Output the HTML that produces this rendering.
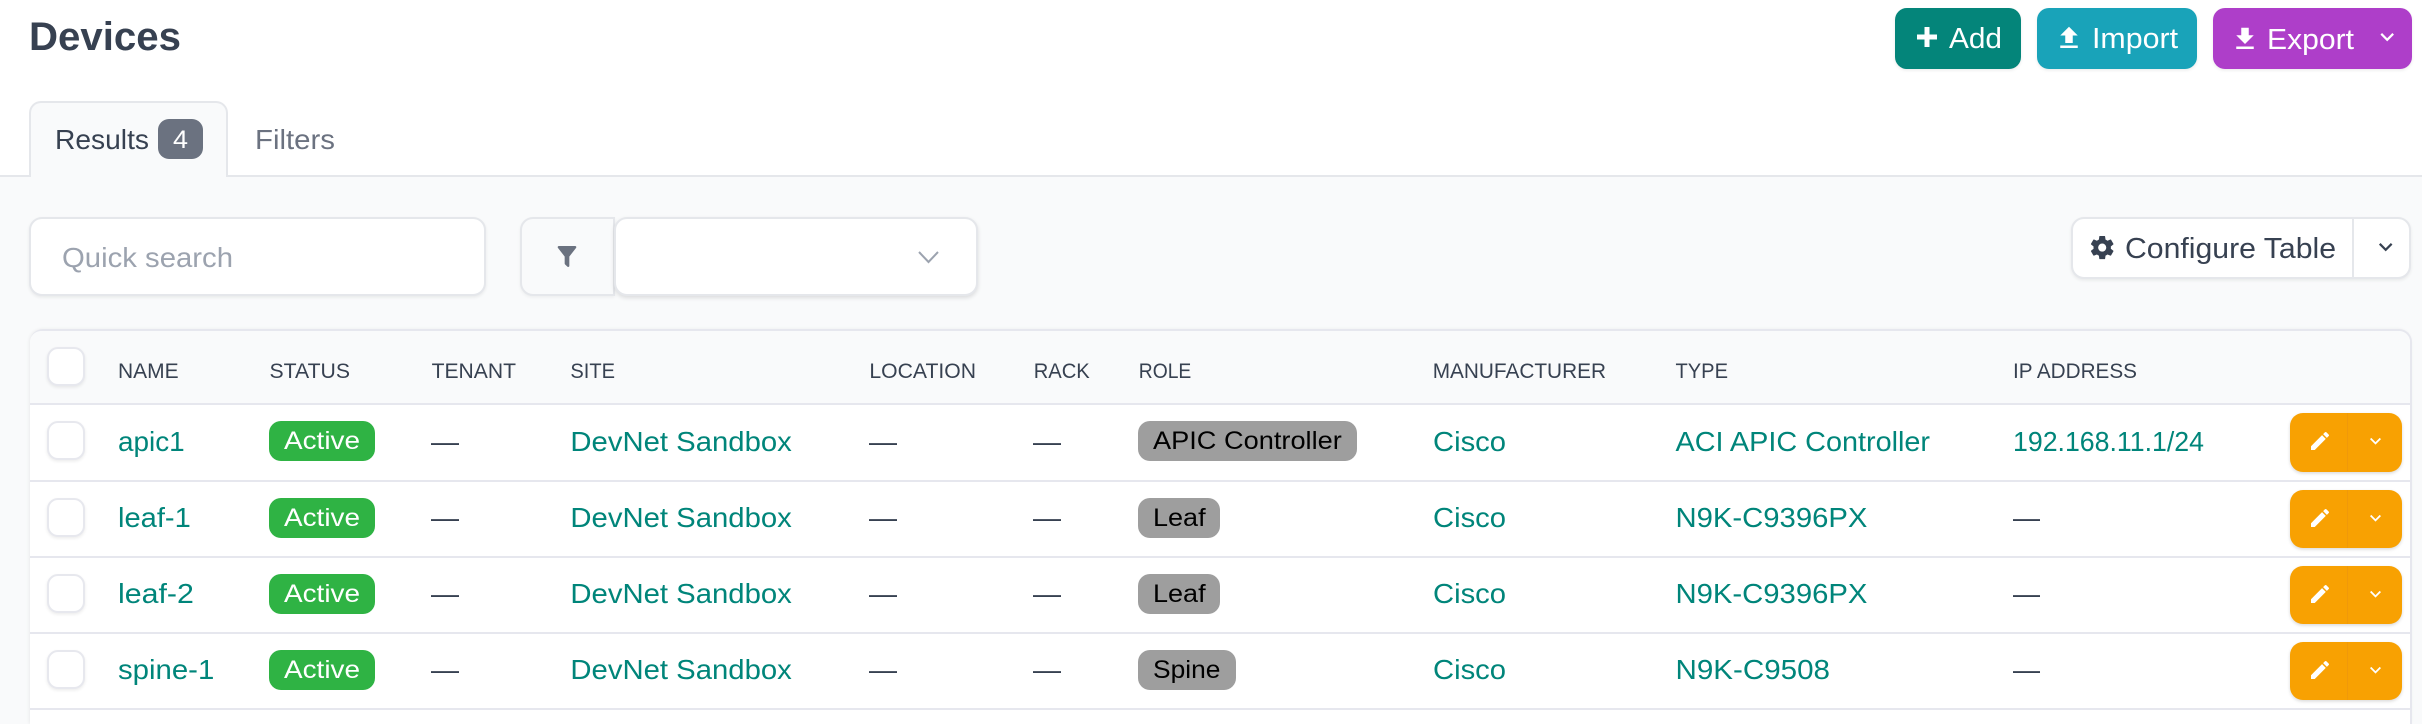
<!DOCTYPE html>
<html lang="en"><head><meta charset="utf-8"><title>Devices</title>
<style>
html,body{margin:0;padding:0;width:2422px;height:724px;overflow:hidden;background:#fff}
#p{position:relative;width:2422px;height:724px;overflow:hidden}
.b{position:absolute;box-sizing:border-box}
svg.o{position:absolute;left:0;top:0;font-family:"Liberation Sans",sans-serif}
.in{border:2px solid #e5e7eb;background:#fff;box-shadow:0 1.5px 3px rgba(0,0,0,.07)}
.cb{left:47px;width:38px;height:39px;border:2px solid #e7e8ee;border-radius:11px;background:#fff;box-shadow:0 1.5px 3px rgba(0,0,0,.08)}
.ln{left:30px;width:2380px;height:2px;background:#e6e7ee}
.act{left:269px;width:106px;height:40px;border-radius:12px;background:#2fb344}
.role{left:1138px;height:40px;border-radius:12px;background:#9e9e9e}
.ed{left:2290px;width:112px;height:58px;border-radius:13px;background:#f8a102;box-shadow:0 1.5px 3px rgba(0,0,0,.15)}
.dv{left:2347px;width:1px;height:58px;background:#f0990a}
.btn{top:8px;height:61px;border-radius:12px;box-shadow:0 1.5px 3px rgba(0,0,0,.08)}
text{font-size:28px}
.l{fill:#00857a}.d{fill:#374151}.h{fill:#374151;font-size:21px}.w{fill:#fff}.bd{font-size:25px}
.k{fill:#000}.i{fill:#fff}
</style></head><body><div id="p">
<div class="b" style="left:0;top:177px;width:2422px;height:547px;background:#f9fafb"></div>
<div class="b" style="left:0;top:175px;width:2422px;height:2px;background:#e5e7eb"></div>
<div class="b" style="left:29px;top:101px;width:199px;height:76px;background:#f9fafb;border:2px solid #e5e7eb;border-bottom:0;border-radius:12px 12px 0 0"></div>
<div class="b" style="left:158px;top:119px;width:45px;height:40px;border-radius:11px;background:#6b7280"></div>
<div class="b btn" style="left:1895px;width:126px;background:#04857a"></div>
<div class="b btn" style="left:2037px;width:160px;background:#19a3b9"></div>
<div class="b btn" style="left:2213px;width:199px;background:#ae3ec9"></div>
<div class="b in" style="left:29px;top:217px;width:457px;height:79px;border-radius:13px"></div>
<div class="b" style="left:520px;top:217px;width:95px;height:79px;background:#f9fafb;border:2px solid #e5e7eb;border-radius:13px 0 0 13px;box-shadow:0 1.5px 3px rgba(0,0,0,.05)"></div>
<div class="b in" style="left:614px;top:217px;width:364px;height:79px;border-radius:13px;box-shadow:0 2px 4px rgba(0,0,0,.12)"></div>
<div class="b in" style="left:2071px;top:217px;width:340px;height:62px;border-radius:13px"></div>
<div class="b" style="left:2352px;top:219px;width:2px;height:60px;background:#e5e7eb"></div>
<div class="b" style="left:30px;top:329px;width:2382px;height:395px;background:#fff;border-top:2px solid #e6e7ee;border-right:2px solid #e6e7ee;border-radius:13px 13px 0 0;box-shadow:-1px 0 3px rgba(0,0,0,.06)"></div>
<div class="b" style="left:30px;top:331px;width:2380px;height:72px;background:#f9fafb;border-radius:11px 11px 0 0"></div>
<div class="b ln" style="top:403px"></div><div class="b ln" style="top:480px"></div><div class="b ln" style="top:556px"></div><div class="b ln" style="top:632px"></div><div class="b ln" style="top:708px"></div>
<div class="b cb" style="top:347px"></div><div class="b cb" style="top:421px"></div><div class="b cb" style="top:498px"></div><div class="b cb" style="top:574px"></div><div class="b cb" style="top:650px"></div>
<div class="b act" style="top:421px"></div><div class="b act" style="top:498px"></div><div class="b act" style="top:574px"></div><div class="b act" style="top:650px"></div>
<div class="b role" style="top:421px;width:219px"></div><div class="b role" style="top:498px;width:82px"></div><div class="b role" style="top:574px;width:82px"></div><div class="b role" style="top:650px;width:98px"></div>
<div class="b ed" style="top:413px;height:59px"></div><div class="b ed" style="top:490px"></div><div class="b ed" style="top:566px"></div><div class="b ed" style="top:642px"></div>
<div class="b dv" style="top:413px"></div><div class="b dv" style="top:490px"></div><div class="b dv" style="top:566px"></div><div class="b dv" style="top:642px"></div>
<svg class="o" width="2422" height="724" viewBox="0 0 2422 724" xmlns="http://www.w3.org/2000/svg">
<defs>
<symbol id="chev" viewBox="0 0 24 24"><path d="M7.41,8.58L12,13.17L16.59,8.58L18,10L12,16L6,10L7.41,8.58Z"/></symbol>
<symbol id="pen" viewBox="0 0 24 24"><path d="M20.71,7.04C21.1,6.65 21.1,6 20.71,5.63L18.37,3.29C18,2.9 17.35,2.9 16.96,3.29L15.12,5.12L18.87,8.87M3,17.25V21H6.75L17.81,9.93L14.06,6.18L3,17.25Z"/></symbol>
</defs>
<text x="29" y="50" textLength="152" lengthAdjust="spacingAndGlyphs" style="font-size:40px;font-weight:700;fill:#374151">Devices</text>
<text x="55" y="149" textLength="94" lengthAdjust="spacingAndGlyphs" class="d">Results</text>
<text x="173" y="148" textLength="15" lengthAdjust="spacingAndGlyphs" class="w" style="font-size:25px">4</text>
<text x="255" y="149" textLength="80" lengthAdjust="spacingAndGlyphs" style="fill:#6b7280">Filters</text>
<svg x="1912" y="22" width="30" height="30" viewBox="0 0 24 24" fill="#fff"><path d="M20 14H14V20H10V14H4V10H10V4H14V10H20V14Z"/></svg>
<text x="1949" y="48" textLength="53" lengthAdjust="spacingAndGlyphs" class="w" style="font-size:29px">Add</text>
<svg x="2054" y="23" width="30" height="30" viewBox="0 0 24 24" fill="#fff"><path d="M9,16V10H5L12,3L19,10H15V16H9M5,20V18H19V20H5Z"/></svg>
<text x="2092" y="48" textLength="86" lengthAdjust="spacingAndGlyphs" class="w" style="font-size:29px">Import</text>
<svg x="2230" y="24" width="30" height="30" viewBox="0 0 24 24" fill="#fff"><path d="M5,20H19V18H5M19,9H15V3H9V9H5L12,16L19,9Z"/></svg>
<text x="2267" y="49" textLength="87" lengthAdjust="spacingAndGlyphs" class="w" style="font-size:29px">Export</text>
<use href="#chev" x="2373.7" y="23.4" width="27" height="27" fill="#fff"/>
<text x="62" y="267" textLength="171" lengthAdjust="spacingAndGlyphs" style="fill:#9ca3af">Quick search</text>
<svg x="553" y="242.5" width="28" height="28" viewBox="0 0 24 24" fill="#6b7280"><path d="M14,12V19.88C14.04,20.18 13.94,20.5 13.71,20.71C13.32,21.1 12.69,21.1 12.3,20.71L10.29,18.7C10.06,18.47 9.96,18.16 10,17.87V12H9.97L4.21,4.62C3.87,4.19 3.95,3.56 4.38,3.22C4.57,3.08 4.78,3 5,3V3H19V3C19.22,3 19.43,3.08 19.62,3.22C20.05,3.56 20.13,4.19 19.79,4.62L14.03,12H14Z"/></svg>
<path d="M919 252L928.5 262L938 252" fill="none" stroke="#9ca3af" stroke-width="2"/>
<svg x="2088.3" y="233.7" width="27.8" height="27.8" viewBox="0 0 24 24" fill="#374151"><path d="M12,15.5A3.5,3.5 0 0,1 8.5,12A3.5,3.5 0 0,1 12,8.5A3.5,3.5 0 0,1 15.5,12A3.5,3.5 0 0,1 12,15.5M19.43,12.97C19.47,12.65 19.5,12.33 19.5,12C19.5,11.67 19.47,11.34 19.43,11L21.54,9.37C21.73,9.22 21.78,8.95 21.66,8.73L19.66,5.27C19.54,5.05 19.27,4.96 19.05,5.05L16.56,6.05C16.04,5.66 15.5,5.32 14.87,5.07L14.5,2.42C14.46,2.18 14.25,2 14,2H10C9.75,2 9.54,2.18 9.5,2.42L9.13,5.07C8.5,5.32 7.96,5.66 7.44,6.05L4.95,5.05C4.73,4.96 4.46,5.05 4.34,5.27L2.34,8.73C2.21,8.95 2.27,9.22 2.46,9.37L4.57,11C4.53,11.34 4.5,11.67 4.5,12C4.5,12.33 4.53,12.65 4.57,12.97L2.46,14.63C2.27,14.78 2.21,15.05 2.34,15.27L4.34,18.73C4.46,18.95 4.73,19.03 4.95,18.95L7.44,17.94C7.96,18.34 8.5,18.68 9.13,18.93L9.5,21.58C9.54,21.82 9.75,22 10,22H14C14.25,22 14.46,21.82 14.5,21.58L14.87,18.93C15.5,18.67 16.04,18.34 16.56,17.94L19.05,18.95C19.27,19.03 19.54,18.95 19.66,18.73L21.66,15.27C21.78,15.05 21.73,14.78 21.54,14.63L19.43,12.97Z"/></svg>
<text x="2125" y="258" textLength="211" lengthAdjust="spacingAndGlyphs" class="d" style="font-size:29px">Configure Table</text>
<use href="#chev" x="2372.2" y="233.4" width="27" height="27" fill="#374151"/>
<text x="118" y="378" textLength="60.6" lengthAdjust="spacingAndGlyphs" class="h">NAME</text>
<text x="269.5" y="378" textLength="80.5" lengthAdjust="spacingAndGlyphs" class="h">STATUS</text>
<text x="431.6" y="378" textLength="84.4" lengthAdjust="spacingAndGlyphs" class="h">TENANT</text>
<text x="570.4" y="378" textLength="44.6" lengthAdjust="spacingAndGlyphs" class="h">SITE</text>
<text x="869.4" y="378" textLength="106.6" lengthAdjust="spacingAndGlyphs" class="h">LOCATION</text>
<text x="1033.7" y="378" textLength="56.1" lengthAdjust="spacingAndGlyphs" class="h">RACK</text>
<text x="1138.8" y="378" textLength="52.5" lengthAdjust="spacingAndGlyphs" class="h">ROLE</text>
<text x="1432.7" y="378" textLength="173.3" lengthAdjust="spacingAndGlyphs" class="h">MANUFACTURER</text>
<text x="1675.5" y="378" textLength="52.5" lengthAdjust="spacingAndGlyphs" class="h">TYPE</text>
<text x="2013" y="378" textLength="124" lengthAdjust="spacingAndGlyphs" class="h">IP ADDRESS</text>
<g id="r1">
<text x="118" y="451" textLength="66.7" lengthAdjust="spacingAndGlyphs" class="l">apic1</text>
<text x="284" y="449" textLength="76" lengthAdjust="spacingAndGlyphs" class="w bd">Active</text>
<text x="431" y="451" textLength="28" lengthAdjust="spacingAndGlyphs" class="d">—</text>
<text x="570.4" y="451" textLength="221.4" lengthAdjust="spacingAndGlyphs" class="l">DevNet Sandbox</text>
<text x="869" y="451" textLength="28" lengthAdjust="spacingAndGlyphs" class="d">—</text>
<text x="1033" y="451" textLength="28" lengthAdjust="spacingAndGlyphs" class="d">—</text>
<text x="1153" y="449" textLength="188.8" lengthAdjust="spacingAndGlyphs" class="k bd">APIC Controller</text>
<text x="1433" y="451" textLength="73" lengthAdjust="spacingAndGlyphs" class="l">Cisco</text>
<text x="1675.5" y="451" textLength="254.5" lengthAdjust="spacingAndGlyphs" class="l">ACI APIC Controller</text>
<text x="2013" y="451" textLength="191" lengthAdjust="spacingAndGlyphs" class="l">192.168.11.1/24</text>
<use href="#pen" x="2308" y="429" width="24" height="24" fill="#fff"/>
<use href="#chev" x="2364.5" y="430" width="22" height="22" fill="#fff"/>
</g>
<g id="r2">
<text x="118" y="527" textLength="72.8" lengthAdjust="spacingAndGlyphs" class="l">leaf-1</text>
<text x="284" y="526" textLength="76" lengthAdjust="spacingAndGlyphs" class="w bd">Active</text>
<text x="431" y="527" textLength="28" lengthAdjust="spacingAndGlyphs" class="d">—</text>
<text x="570.4" y="527" textLength="221.4" lengthAdjust="spacingAndGlyphs" class="l">DevNet Sandbox</text>
<text x="869" y="527" textLength="28" lengthAdjust="spacingAndGlyphs" class="d">—</text>
<text x="1033" y="527" textLength="28" lengthAdjust="spacingAndGlyphs" class="d">—</text>
<text x="1153" y="526" textLength="52.6" lengthAdjust="spacingAndGlyphs" class="k bd">Leaf</text>
<text x="1433" y="527" textLength="73" lengthAdjust="spacingAndGlyphs" class="l">Cisco</text>
<text x="1675.5" y="527" textLength="191.9" lengthAdjust="spacingAndGlyphs" class="l">N9K-C9396PX</text>
<text x="2013" y="527" textLength="27" lengthAdjust="spacingAndGlyphs" class="d">—</text>
<use href="#pen" x="2308" y="506" width="24" height="24" fill="#fff"/>
<use href="#chev" x="2364.5" y="507" width="22" height="22" fill="#fff"/>
</g>
<g id="r3">
<text x="118" y="603" textLength="75.9" lengthAdjust="spacingAndGlyphs" class="l">leaf-2</text>
<text x="284" y="602" textLength="76" lengthAdjust="spacingAndGlyphs" class="w bd">Active</text>
<text x="431" y="603" textLength="28" lengthAdjust="spacingAndGlyphs" class="d">—</text>
<text x="570.4" y="603" textLength="221.4" lengthAdjust="spacingAndGlyphs" class="l">DevNet Sandbox</text>
<text x="869" y="603" textLength="28" lengthAdjust="spacingAndGlyphs" class="d">—</text>
<text x="1033" y="603" textLength="28" lengthAdjust="spacingAndGlyphs" class="d">—</text>
<text x="1153" y="602" textLength="52.6" lengthAdjust="spacingAndGlyphs" class="k bd">Leaf</text>
<text x="1433" y="603" textLength="73" lengthAdjust="spacingAndGlyphs" class="l">Cisco</text>
<text x="1675.5" y="603" textLength="191.9" lengthAdjust="spacingAndGlyphs" class="l">N9K-C9396PX</text>
<text x="2013" y="603" textLength="27" lengthAdjust="spacingAndGlyphs" class="d">—</text>
<use href="#pen" x="2308" y="582" width="24" height="24" fill="#fff"/>
<use href="#chev" x="2364.5" y="583" width="22" height="22" fill="#fff"/>
</g>
<g id="r4">
<text x="118" y="679" textLength="96.3" lengthAdjust="spacingAndGlyphs" class="l">spine-1</text>
<text x="284" y="678" textLength="76" lengthAdjust="spacingAndGlyphs" class="w bd">Active</text>
<text x="431" y="679" textLength="28" lengthAdjust="spacingAndGlyphs" class="d">—</text>
<text x="570.4" y="679" textLength="221.4" lengthAdjust="spacingAndGlyphs" class="l">DevNet Sandbox</text>
<text x="869" y="679" textLength="28" lengthAdjust="spacingAndGlyphs" class="d">—</text>
<text x="1033" y="679" textLength="28" lengthAdjust="spacingAndGlyphs" class="d">—</text>
<text x="1153" y="678" textLength="67.4" lengthAdjust="spacingAndGlyphs" class="k bd">Spine</text>
<text x="1433" y="679" textLength="73" lengthAdjust="spacingAndGlyphs" class="l">Cisco</text>
<text x="1675.5" y="679" textLength="154.5" lengthAdjust="spacingAndGlyphs" class="l">N9K-C9508</text>
<text x="2013" y="679" textLength="27" lengthAdjust="spacingAndGlyphs" class="d">—</text>
<use href="#pen" x="2308" y="658" width="24" height="24" fill="#fff"/>
<use href="#chev" x="2364.5" y="659" width="22" height="22" fill="#fff"/>
</g>
</svg>
</div></body></html>
